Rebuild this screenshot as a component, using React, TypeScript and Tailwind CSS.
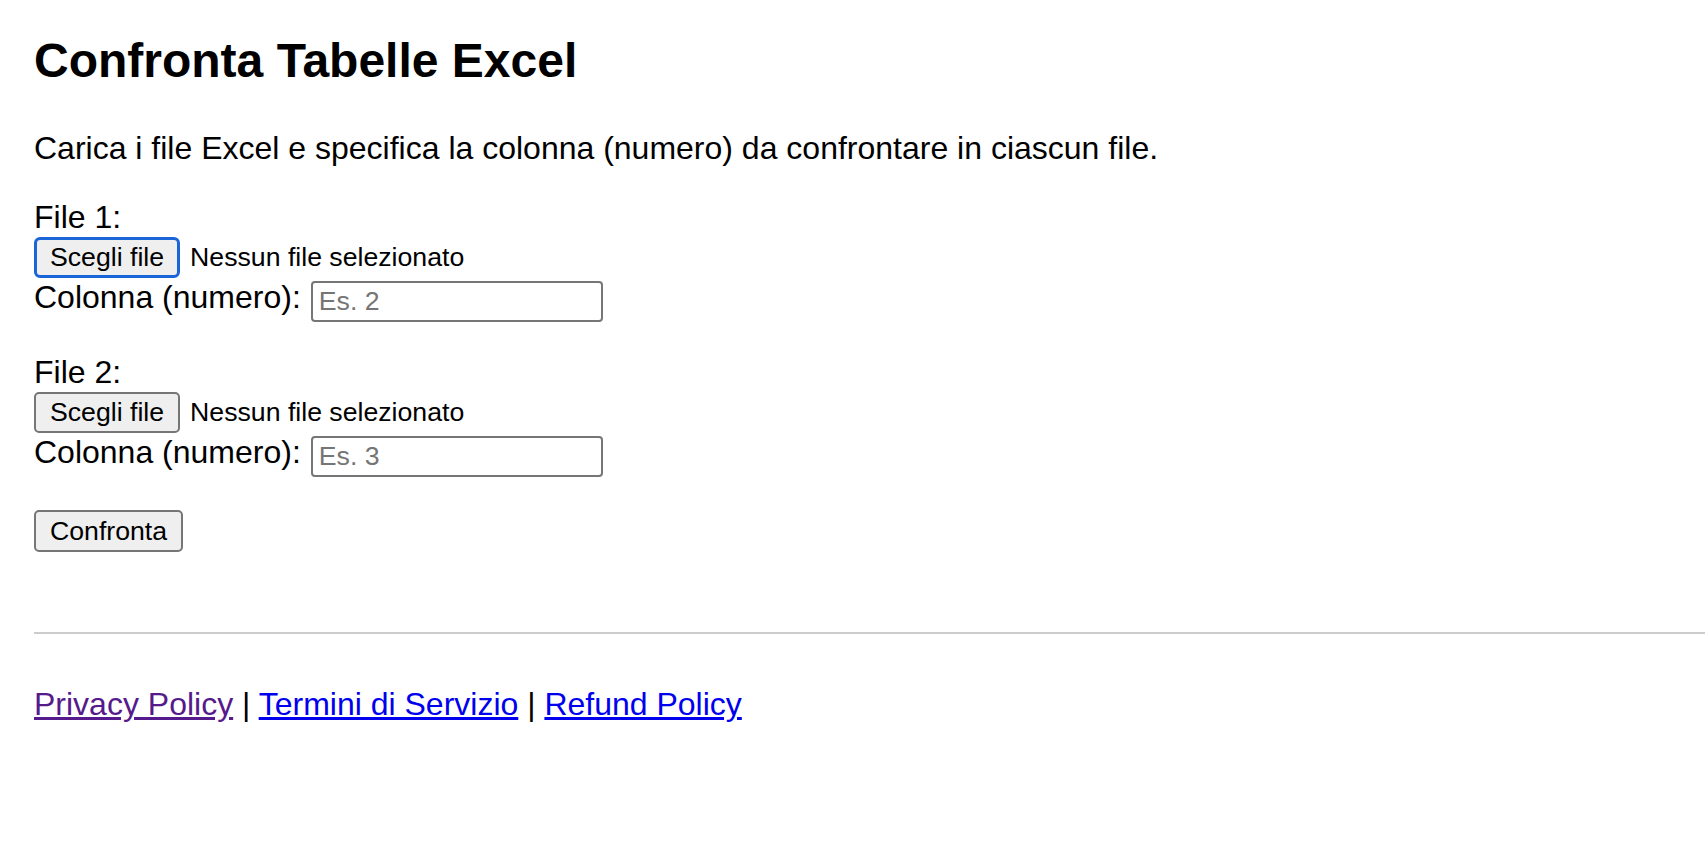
const fontStack = { fontFamily: '"Liberation Sans", Arial, sans-serif' };

function FilePicker({ focused }: { focused?: boolean }) {
  return (
    <div className="flex h-[43px] items-start">
      <button
        type="button"
        className={
          focused
            ? "mt-[1px] flex h-[41px] items-center rounded-[6px] border-[3px] border-[#1a66d9] bg-[#efefef] px-[13px] text-[26.67px] leading-[31px] text-black"
            : "mt-[1px] flex h-[41px] items-center rounded-[5px] border-2 border-[#767676] bg-[#efefef] px-[14px] text-[26.67px] leading-[31px] text-black"
        }
      >
        Scegli file
      </button>
      <span className="ml-[10px] mt-[1px] flex h-[41px] items-center text-[26.67px] leading-[31px]">
        Nessun file selezionato
      </span>
    </div>
  );
}

function FileGroup({ label, placeholder, focused }: { label: string; placeholder: string; focused?: boolean }) {
  return (
    <div>
      <label className="block text-[32px] leading-[37px]">{label}</label>
      <FilePicker focused={focused} />
      <div className="flex h-[43px] items-start">
        <span className="text-[32px] leading-[37px]">Colonna (numero):</span>
        <input
          type="number"
          placeholder={placeholder}
          className="ml-[10px] mt-[2px] h-[41px] w-[292px] rounded-[4px] border-2 border-[#767676] bg-white pl-[6px] text-[26.67px] leading-[31px] outline-none placeholder:text-[#757575]"
        />
      </div>
    </div>
  );
}

export default function App() {
  return (
    <main className="min-h-screen bg-white pl-[34px] pt-[33px] text-black" style={fontStack}>
      <h1 className="text-[48px] font-bold leading-[55px]">Confronta Tabelle Excel</h1>

      <p className="mt-[42px] text-[32px] leading-[37px]">
        Carica i file Excel e specifica la colonna (numero) da confrontare in ciascun file.
      </p>

      <div className="mt-[32px] flex flex-col gap-[32px]">
        <FileGroup label="File 1:" placeholder="Es. 2" focused />
        <FileGroup label="File 2:" placeholder="Es. 3" />
      </div>

      <button
        type="button"
        className="mt-[33px] flex h-[42px] items-center rounded-[5px] border-2 border-[#767676] bg-[#efefef] px-[14px] text-[26.67px] leading-[31px] text-black"
      >
        Confronta
      </button>

      <hr className="mt-[80px] h-[2px] border-0 bg-[#cccccc]" />

      {/* Footer links */}
      <p className="mt-[52px] text-[32px] leading-[37px]">
        <a href="#privacy" className="text-[#551a8b] underline">Privacy Policy</a>
        {" | "}
        <a href="#termini" className="text-[#0000ee] underline">Termini di Servizio</a>
        {" | "}
        <a href="#refund" className="text-[#0000ee] underline">Refund Policy</a>
      </p>
    </main>
  );
}
